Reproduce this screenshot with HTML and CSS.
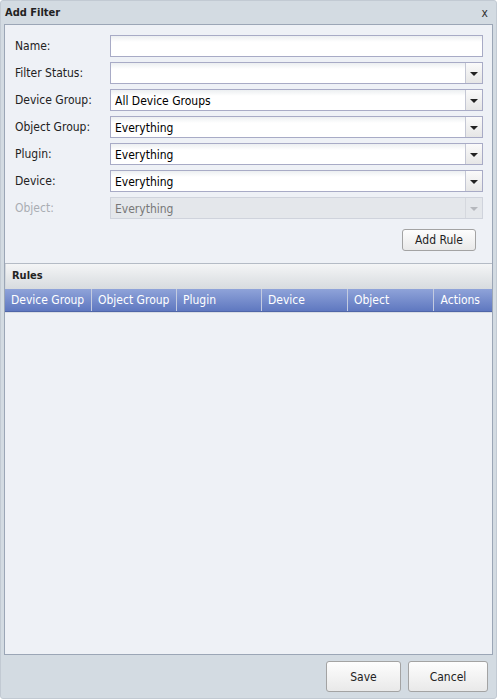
FILE: index.html
```html
<!DOCTYPE html>
<html lang="en">
<head>
  <meta charset="UTF-8">
  <title>Add Filter</title>
  <link rel="stylesheet" href="styles.css">
</head>
<body>

  <div class="window">
    <div class="title-bar">
      <span class="title">Add Filter</span>
      <span class="close">x</span>
    </div>

    <div class="panel">
      <div class="form">
        <div class="form-row">
          <label>Name:</label>
          <div class="field"><span class="value"></span></div>
        </div>
        <div class="form-row">
          <label>Filter Status:</label>
          <div class="field combo"><span class="value"></span><span class="trigger"><i class="arrow"></i></span></div>
        </div>
        <div class="form-row">
          <label>Device Group:</label>
          <div class="field combo"><span class="value">All Device Groups</span><span class="trigger"><i class="arrow"></i></span></div>
        </div>
        <div class="form-row">
          <label>Object Group:</label>
          <div class="field combo"><span class="value">Everything</span><span class="trigger"><i class="arrow"></i></span></div>
        </div>
        <div class="form-row">
          <label>Plugin:</label>
          <div class="field combo"><span class="value">Everything</span><span class="trigger"><i class="arrow"></i></span></div>
        </div>
        <div class="form-row">
          <label>Device:</label>
          <div class="field combo"><span class="value">Everything</span><span class="trigger"><i class="arrow"></i></span></div>
        </div>
        <div class="form-row disabled">
          <label>Object:</label>
          <div class="field combo"><span class="value">Everything</span><span class="trigger"><i class="arrow"></i></span></div>
        </div>

        <div class="add-row">
          <button class="btn add-rule" type="button">Add Rule</button>
        </div>
      </div>

      <div class="grid">
        <div class="grid-title">Rules</div>
        <div class="grid-head">
          <div class="col">Device Group</div>
          <div class="col">Object Group</div>
          <div class="col">Plugin</div>
          <div class="col">Device</div>
          <div class="col">Object</div>
          <div class="col actions">Actions</div>
        </div>
        <div class="grid-body"></div>
      </div>
    </div>

    <div class="footer">
      <button class="btn big save" type="button">Save</button>
      <button class="btn big cancel" type="button">Cancel</button>
    </div>
  </div>

</body>
</html>
```

FILE: styles.css
```css
body {
  margin: 0;
  padding: 0;
  background-color: #ffffff;
  font-family: 'DejaVu Sans Condensed', 'DejaVu Sans', sans-serif;
  font-size: 12px;
  color: #000;
}

.window {
  width: 495px;
  height: 697px;
  background-color: #d3dbe2;
  border: 1px solid #c2cad3;
  border-radius: 3px;
  display: flex;
  flex-direction: column;
}

.title-bar {
  height: 23px;
  display: flex;
  align-items: center;
  justify-content: space-between;
  padding: 0 8px 0 4px;
}

.title {
  font-weight: bold;
  font-size: 11px;
  color: #222;
}

.close {
  font-size: 12px;
  color: #333;
}

.panel {
  flex: 1;
  margin: 0 3px 0 3px;
  background-color: #eef1f6;
  border: 1px solid #9ba6b6;
  display: flex;
  flex-direction: column;
}

.form {
  padding: 10px 9px 0 10px;
}

.form-row {
  display: flex;
  align-items: center;
  height: 22px;
  margin-bottom: 5px;
}

.form-row label {
  width: 95px;
  color: #222;
}

.field {
  flex: 1;
  height: 20px;
  border: 1px solid #a8abc6;
  background: linear-gradient(#eceff1, #ffffff 6px);
  display: flex;
  align-items: center;
}

.field .value {
  flex: 1;
  padding: 2px 0 0 4px;
}

.trigger {
  width: 16px;
  height: 20px;
  border-left: 1px solid #c4c7d4;
  background: linear-gradient(#fafafa, #e6e6e6);
  display: flex;
  align-items: center;
  justify-content: center;
}

.arrow {
  width: 0;
  height: 0;
  border-left: 4px solid transparent;
  border-right: 4px solid transparent;
  border-top: 4px solid #222;
  margin-top: 1px;
}

.disabled label {
  color: #a9adb3;
}

.disabled .field {
  background: #e4e7eb;
  border-color: #cfd3dc;
  color: #777;
}

.disabled .trigger {
  background: #e4e7eb;
  border-left-color: #d5d8de;
}

.disabled .arrow {
  border-top-color: #b5b8bd;
}

.add-row {
  display: flex;
  justify-content: flex-end;
  padding: 5px 7px 0 0;
  height: 28px;
}

.btn {
  font-family: 'DejaVu Sans Condensed', 'DejaVu Sans', sans-serif;
  font-size: 12px;
  color: #222;
  border: 1px solid #a3a3a3;
  border-radius: 3px;
  background: linear-gradient(#fdfdfd, #e9e9e9);
  padding: 0;
}

.add-rule {
  width: 74px;
  height: 22px;
}

.grid {
  flex: 1;
  margin-top: 6px;
  display: flex;
  flex-direction: column;
  border-top: 1px solid #b4bbc5;
}

.grid-title {
  height: 25px;
  line-height: 24px;
  padding-left: 6px;
  font-weight: bold;
  font-size: 11px;
  color: #222;
  background: linear-gradient(#f4f5f6, #d7dbdf);
  border-left: 1px solid #d3d8de;
}

.grid-head {
  height: 22px;
  display: flex;
  background: linear-gradient(#8fa3d9, #5f78c0);
  border-bottom: 1px solid #4f66a8;
  color: #fff;
}

.grid-head .col {
  width: 86px;
  line-height: 22px;
  padding-left: 6px;
  border-right: 1px solid #c3cbe0;
  box-sizing: border-box;
}

.grid-head .col:first-child {
  width: 87px;
}

.grid-head .col:nth-child(2),
.grid-head .col:nth-child(3) {
  width: 85px;
}

.grid-head .actions {
  flex: 1;
  text-align: right;
  padding-right: 12px;
  border-right: none;
}

.grid-body {
  flex: 1;
  border-top: 1px solid #d9dde4;
}

.footer {
  height: 43px;
  display: flex;
  justify-content: flex-end;
  align-items: center;
  gap: 7px;
  padding-right: 8px;
}

.big {
  height: 31px;
}

.save {
  width: 75px;
}

.cancel {
  width: 80px;
}
```
